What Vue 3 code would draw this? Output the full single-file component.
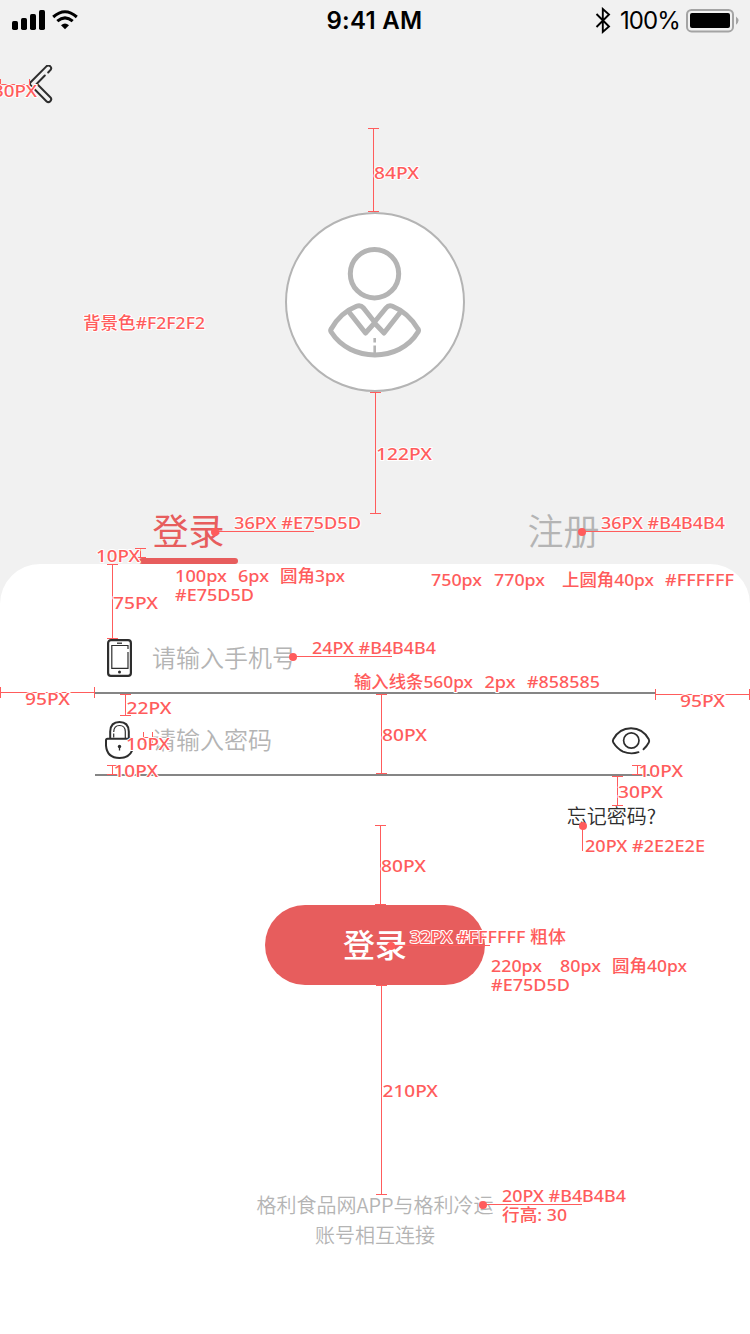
<script setup>
const vertical = (x, y1, y2) => `M${x} ${y1}V${y2}M${x - 5.5} ${y1}h11M${x - 5.5} ${y2}h11`
const horizontal = (y, x1, x2) => `M${x1} ${y}H${x2}M${x1} ${y - 5.5}v11M${x2} ${y - 5.5}v11`

// Dimension brackets between elements
const rulers = [
  horizontal(84.5, 0.5, 29.5),
  vertical(373.5, 128.5, 211.5),
  vertical(375.5, 392.5, 513.5),
  vertical(140.5, 548.5, 557.5),
  vertical(112.5, 564.5, 638.5),
  horizontal(692.5, 0.5, 94.5),
  horizontal(694.5, 655.5, 749.5),
  vertical(125.5, 694.5, 715.5),
  vertical(381.5, 694.5, 773.5),
  horizontal(737.5, 143.5, 152.5),
  vertical(112.5, 765.5, 774.5),
  vertical(637.5, 765.5, 774.5),
  vertical(617.5, 776.5, 805.5),
  vertical(380.5, 825.5, 904.5),
  vertical(381.5, 985.5, 1194.5)
]

// Dots with a leader line pointing at a style note
const leaders = [
  { x: 215, y: 532, d: 'M215 531.5H314' },
  { x: 582, y: 532, d: 'M582 531.5H681' },
  { x: 293, y: 657, d: 'M293 656.5H392' },
  { x: 583, y: 826, d: 'M582.5 826V851' },
  { x: 391, y: 946, d: 'M391 945.5H490' },
  { x: 483, y: 1205, d: 'M483 1204.5H582' }
]

// [text, x, baseline, width]
const notes = [
  ['30PX', -7, 96.5, 44],
  ['84PX', 374, 178.5, 45],
  ['背景色#F2F2F2', 83, 328.5, 122],
  ['122PX', 376, 459.5, 56],
  ['10PX', 96, 561.5, 44],
  ['36PX #E75D5D', 234, 528.5, 127],
  ['100px', 175, 582, 52],
  ['6px', 238, 582, 31],
  ['圆角3px', 280, 582, 65],
  ['#E75D5D', 175, 600.5, 79],
  ['36PX #B4B4B4', 601, 528.5, 124],
  ['750px', 431, 586, 51],
  ['770px', 494, 586, 51],
  ['上圆角40px', 562, 586, 92],
  ['#FFFFFF', 665, 586, 69],
  ['75PX', 113, 608.5, 45],
  ['24PX #B4B4B4', 312, 654, 124],
  ['输入线条560px', 354, 687.5, 119],
  ['2px', 484.5, 687.5, 31],
  ['#858585', 527, 687.5, 73],
  ['95PX', 25, 704.5, 45],
  ['95PX', 680, 706.5, 45],
  ['22PX', 126.5, 713.5, 45],
  ['80PX', 382, 740.5, 45],
  ['10PX', 126, 749.5, 44],
  ['10PX', 113.5, 776.5, 44.5],
  ['10PX', 638.5, 776.5, 44.5],
  ['30PX', 618, 797.5, 45],
  ['20PX #2E2E2E', 585, 851.5, 120],
  ['80PX', 381, 871.5, 45],
  ['32PX #FFFFFF 粗体', 410, 942.5, 156],
  ['220px', 491, 971.5, 51],
  ['80px', 560, 971.5, 41],
  ['圆角40px', 612, 971.5, 75],
  ['#E75D5D', 491, 990.5, 79],
  ['210PX', 382.5, 1096.5, 55.5],
  ['20PX #B4B4B4', 502, 1201.5, 124],
  ['行高: 30', 502, 1220.5, 65]
]
</script>

<template>
  <main class="screen">
    <header class="status">
      <svg class="signal" width="68" height="22" viewBox="0 0 68 22">
        <rect x="0" y="12" width="6" height="9" rx="1.7" />
        <rect x="9" y="9" width="6" height="12" rx="1.7" />
        <rect x="18" y="5" width="6" height="16" rx="1.7" />
        <rect x="27" y="1" width="6" height="20" rx="1.7" />
        <g fill="none" stroke="#000" stroke-width="3">
          <path d="M41.2 8Q53 -2.4 64.8 8" />
          <path d="M45.3 12.2Q53 5.6 60.7 12.2" />
        </g>
        <path d="M49 16.3Q53 12.6 57 16.3L53 20.3Z" />
      </svg>
      <div class="time">9:41 AM</div>
      <div class="power">
        <svg width="16" height="28" viewBox="0 0 16 28">
          <path d="M1.5 7L14 19.5L7.8 25V2L14 7.5L1.5 20" fill="none" stroke="#000" stroke-width="1.9" />
        </svg>
        <span class="percent">100%</span>
        <svg class="battery" width="54" height="24" viewBox="0 0 54 24">
          <rect x="1" y="1" width="46" height="21.4" rx="4.5" fill="none" stroke="#a4a4a4" stroke-width="2" />
          <rect x="4" y="4" width="40" height="15" rx="2" />
          <path d="M50 7.5Q55 11.5 50 15.8Z" fill="#a4a4a4" />
        </svg>
      </div>
    </header>

    <nav class="back">
      <svg width="24" height="40" viewBox="0 0 24 40" fill="none" stroke="#2e2e2e" stroke-width="2" stroke-linecap="round">
        <path d="M19.200 7.500L21.300 5.200A2.700 2.700 0 0 0 17.400 1.400L1.600 17.200Q.4 18.700 1.600 20.200L17.400 36.200A2.700 2.700 0 0 0 21.300 32.300L7.800 18.700L15.800 10.500" />
      </svg>
    </nav>

    <div class="avatar">
      <svg width="96" height="114" viewBox="0 0 96 114" fill="none" stroke="#b4b4b4" stroke-width="5" stroke-linejoin="round">
        <circle cx="47.5" cy="28.700" r="24.200" />
        <path d="M47.500 77L36.500 63Q33.500 59.700 29.500 61.300Q13.500 67.500 4.200 84Q3.200 85.500 4.200 87C23.500 117.500 72.500 117.500 91 87Q92 85.500 91 84Q81 67.500 65.500 61.300Q61.700 59.700 59 63L47.500 77Z" />
        <path d="M22 67L38.500 88L47.500 78L57 88L73.500 67" />
        <path d="M47.700 93V97.500M47.700 100.500V110.500" stroke-width="2.600" />
      </svg>
    </div>

    <div class="tabs">
      <div class="tab active">登录</div>
      <div class="tab">注册</div>
    </div>

    <section class="card">
      <div class="field phone">
        <svg class="icon" width="28" height="40" viewBox="0 0 28 40">
          <rect x="3.100" y="1.200" width="22.800" height="35.600" rx="2.800" fill="none" stroke="#2e2e2e" stroke-width="2.200" />
          <path d="M23 10V6.500H6.800V29.300H23V13" fill="none" stroke="#2e2e2e" stroke-width="1.200" />
          <path d="M12 4.200h5" stroke="#2e2e2e" stroke-width="1.300" />
          <circle cx="14.500" cy="33" r="1.500" fill="#2e2e2e" />
        </svg>
        <span>请输入手机号</span>
      </div>
      <div class="field">
        <svg class="icon" width="28" height="40" viewBox="0 0 28 40" fill="none" stroke="#2e2e2e" stroke-width="2">
          <path d="M2.500 17.800H26.500Q28.200 17.800 28.200 19.600V24.600Q27 36.800 14.500 37Q2 36.800 1 24.600V19.600Q1 17.800 2.500 17.800Z" />
          <path d="M5.200 17.500V10.500Q5.500 1 14.500 1T23.800 10.500V17.500" />
          <path d="M8.700 16.500V12.500M8.700 11Q8.900 4.500 14.500 4.500T20.300 10.500V17.500" stroke-width="1.200" />
          <circle cx="14.500" cy="25.500" r="1.700" fill="#2e2e2e" stroke="none" />
          <path d="M14.500 25.500V29.500" stroke-width="1.300" />
        </svg>
        <span>请输入密码</span>
        <svg class="eye" width="40" height="30" viewBox="0 0 40 30" fill="none" stroke="#2e2e2e" stroke-width="1.900" stroke-linecap="round">
          <path d="M27.500 26.200Q20 28.800 12 25.700Q6 22.500 2.300 16.500Q1.400 15 2.300 13.300C10 -1.500 30 -1.500 37.800 13.300Q38.600 15 37.800 16.500Q36 20 32.500 23.300" />
          <circle cx="20.300" cy="14.500" r="7.700" stroke-width="1.700" />
        </svg>
      </div>
      <div class="forgot">忘记密码?</div>
      <button class="submit" type="button">登录</button>
      <p class="tip">格利食品网APP与格利冷运<br />账号相互连接</p>
    </section>

    <svg class="spec" width="750" height="1334" viewBox="0 0 750 1334">
      <path v-for="(d, i) in rulers" :key="`r${i}`" :d="d" class="rule" />
      <g v-for="(l, i) in leaders" :key="`l${i}`">
        <path :d="l.d" class="rule" />
        <circle :cx="l.x" :cy="l.y" r="4" class="dot" />
      </g>
      <text
        v-for="([text, x, y, w], i) in notes"
        :key="`n${i}`"
        :x="x"
        :y="y"
        :textLength="w"
        lengthAdjust="spacingAndGlyphs"
      >{{ text }}</text>
    </svg>
  </main>
</template>

<style>
body {
  background: #f1f1f1;
}
</style>

<style scoped>
.screen {
  position: relative;
  display: flex;
  flex-direction: column;
  width: 750px;
  height: 1334px;
  overflow: hidden;
  background: #f1f1f1;
  font-family: "Noto Sans CJK SC", "Noto Sans", sans-serif;
  font-weight: 350;
}
svg {
  display: block;
  flex: none;
}
.status {
  display: grid;
  grid-template-columns: 1fr auto 1fr;
  align-items: center;
  height: 40px;
  padding: 0 10px 0 12px;
  font: 24px/40px Inter, sans-serif;
  color: #000;
}
.time {
  padding: 2px 3px 0 0;
  font-weight: 600;
  line-height: 38px;
  letter-spacing: 0.3px;
}
.power {
  display: flex;
  align-items: center;
  justify-content: flex-end;
  padding-top: 2px;
  line-height: 38px;
}
.percent {
  margin: 0 6px 0 9px;
  letter-spacing: -0.9px;
}
.back {
  height: 60px;
  padding: 25px 0 0 29px;
  margin-bottom: -1px;
}
.avatar {
  display: grid;
  place-items: center;
  width: 176px;
  height: 176px;
  margin: 88px auto 0;
  border: 2px solid #b4b4b4;
  border-radius: 50%;
  background: #fff;
}
.tabs {
  display: flex;
  justify-content: space-between;
  height: 62px;
  margin: 110px 137px 0 139px;
}
.tab {
  width: 99px;
  height: 62px;
  font-size: 36px;
  line-height: 54px;
  text-align: center;
  color: #b4b4b4;
}
.tab.active {
  font-weight: 400;
  color: #e75d5d;
}
.tab.active::after {
  content: "";
  display: block;
  height: 6px;
  margin-top: 2px;
  border-radius: 3px;
  background: #e75d5d;
}
.card {
  flex: 1;
  border-radius: 40px 40px 0 0;
  background: #fff;
}
.field {
  display: flex;
  align-items: center;
  height: 72px;
  margin: 0 95px;
  padding: 8px 0 0 10px;
  border-bottom: 2px solid #858585;
  font-size: 24px;
  color: #b4b4b4;
}
.field.phone {
  padding-top: 56px;
}
.icon {
  margin: 6px 19px 0 0;
}
.eye {
  margin: 6px 4px 0 auto;
}
.forgot {
  height: 30px;
  margin: 25px 94px 0 0;
  font-size: 20px;
  line-height: 30px;
  text-align: right;
  color: #2e2e2e;
}
.submit {
  display: block;
  width: 220px;
  height: 80px;
  margin: 74px auto 0;
  padding: 0 0 5px;
  border: 0;
  border-radius: 40px;
  background: #e75d5d;
  color: #fff;
  font: 500 32px/74px "Noto Sans CJK SC", sans-serif;
}
.tip {
  margin: 205px 0 0;
  font-size: 20px;
  line-height: 30px;
  text-align: center;
  color: #b4b4b4;
}
.spec {
  position: absolute;
  inset: 0;
  pointer-events: none;
}
.rule {
  fill: none;
  stroke: #ff5c5c;
  stroke-width: 1;
}
.dot {
  fill: #ff5c5c;
}
.spec text {
  fill: #ff5c5c;
  stroke: #fff;
  stroke-width: 2px;
  stroke-linejoin: round;
  paint-order: stroke;
  font: 500 17px "Noto Sans", "Noto Sans CJK SC", sans-serif;
}
</style>
